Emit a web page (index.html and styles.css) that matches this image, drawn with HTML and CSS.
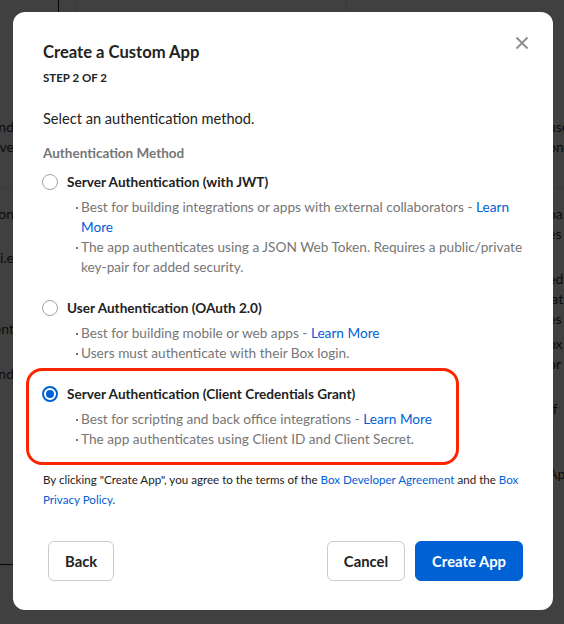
FILE: index.html
```html
<!DOCTYPE html>
<html lang="en">
<head>
<meta charset="utf-8">
<title>Create a Custom App</title>
<link rel="stylesheet" href="styles.css">
</head>
<body>
<div class="page">
  <div class="topbar">
    <span class="tb tb-a"></span>
    <span class="tb tb-b"></span>
    <span class="tb tb-c"></span>
  </div>
  <div class="cols">
    <div class="col col-left">
      <p class="r1">Find</p>
      <p>Serve</p>
      <hr class="rule">
      <p class="r3">Action</p>
      <p class="r4">i.e</p>
      <p class="r5">Content</p>
      <p class="r6">and</p>
      <hr class="rule navy">
    </div>
    <div class="col col-mid"></div>
    <div class="col col-right">
      <p class="r1">use</p>
      <p>on</p>
      <hr class="rule">
      <p class="r3">pa</p>
      <p>es</p>
      <p class="r7">ed</p>
      <p>lat</p>
      <p>es</p>
      <p class="r8">ox</p>
      <p>or</p>
      <p class="r9">tf</p>
      <p>r</p>
      <p class="r9">Ap</p>
    </div>
  </div>
</div>

<div class="overlay">
  <div class="modal" role="dialog">
    <button class="close" aria-label="Close">
      <svg viewBox="0 0 14 14" width="14" height="14"><path d="M1.5 1.5 L12.5 12.5 M12.5 1.5 L1.5 12.5" stroke="#909090" stroke-width="2" fill="none"/></svg>
    </button>
    <h1 class="title">Create a Custom App</h1>
    <div class="step">STEP 2 OF 2</div>
    <p class="lead">Select an authentication method.</p>
    <div class="group-label">Authentication Method</div>

    <div class="options">
      <div class="option">
        <label class="opt-label"><span class="radio"></span>Server Authentication (with JWT)</label>
        <ul class="bullets">
          <li>Best for building integrations or apps with external collaborators - <a href="#">Learn More</a></li>
          <li>The app authenticates using a JSON Web Token. Requires a public/private key-pair for added security.</li>
        </ul>
      </div>
      <div class="option">
        <label class="opt-label"><span class="radio"></span>User Authentication (OAuth 2.0)</label>
        <ul class="bullets">
          <li>Best for building mobile or web apps - <a href="#">Learn More</a></li>
          <li>Users must authenticate with their Box login.</li>
        </ul>
      </div>
      <div class="option highlight">
        <label class="opt-label"><span class="radio checked"></span>Server Authentication (Client Credentials Grant)</label>
        <ul class="bullets">
          <li>Best for scripting and back office integrations - <a href="#">Learn More</a></li>
          <li>The app authenticates using Client ID and Client Secret.</li>
        </ul>
      </div>
    </div>

    <p class="terms">By clicking "Create App", you agree to the terms of the <a href="#">Box Developer Agreement</a> and the <a href="#">Box Privacy Policy</a>.</p>

    <div class="footer">
      <button class="btn">Back</button>
      <div class="spacer"></div>
      <button class="btn">Cancel</button>
      <button class="btn primary">Create App</button>
    </div>
  </div>
</div>
</body>
</html>
```
FILE: styles.css
```css
* { box-sizing: border-box; margin: 0; padding: 0; }
html, body { height: 100%; }
body {
  font-family: Lato, "Helvetica Neue", Arial, sans-serif;
  color: #222;
  background: #fff;
  overflow: hidden;
}

/* background page */
.page { height: 100%; }
.topbar { height: 12px; display: flex; }
.tb { display: block; height: 12px; }
.tb-a { width: 59px; border-right: 1px solid #0a1f44; }
.tb-b { width: 18px; border-right: 1px solid #e4e4e4; }
.tb-c { width: 270px; border-right: 1px solid #e4e4e4; }
.cols { display: flex; height: 612px; }
.col { font-size: 14px; line-height: 20px; color: #333; white-space: nowrap; }
.col-left { width: 14px; overflow: hidden; text-align: right; display: flex; flex-direction: column; align-items: flex-end; }
.col-left p { direction: rtl; }
.col-mid { flex: 1; }
.col-right { width: 16px; overflow: hidden; }
.col p { line-height: 20px; }
.r1 { margin-top: 105px; }
.rule { border: 0; border-top: 1px solid #e8e8e8; margin-top: 31px; width: 600px; }
.r3 { margin-top: 15px; }
.r4 { margin-top: 24px; }
.r5 { margin-top: 51px; }
.r6 { margin-top: 25px; }
.r7 { margin-top: 25px; }
.r8 { margin-top: 5px; }
.r9 { margin-top: 25px; }
.rule.navy { border-top-color: #0a1f44; margin-top: 180px; }

/* overlay + modal */
.overlay {
  position: fixed;
  inset: 0;
  background: rgba(0, 0, 0, 0.75);
  padding: 12px 11px 14px 13px;
}
.modal {
  position: relative;
  background: #fff;
  border-radius: 12px;
  height: 598px;
  padding: 29px 30px 29px 30px;
  display: flex;
  flex-direction: column;
}
.close {
  position: absolute;
  top: 24px;
  right: 24px;
  width: 14px;
  height: 14px;
  border: 0;
  background: none;
  display: flex;
}
.title { font-size: 16.6px; line-height: 22px; font-weight: 700; color: #222; }
.step { margin-top: 7px; font-size: 11.5px; line-height: 16px; font-weight: 700; color: #222; }
.lead { margin-top: 23px; font-size: 14.6px; line-height: 20px; color: #222; }
.group-label { margin-top: 14px; font-size: 13.5px; line-height: 20px; font-weight: 700; color: #767676; }

.options { margin-top: 9px; display: flex; flex-direction: column; gap: 21px; }
.option { position: relative; }
.opt-label {
  display: flex;
  align-items: center;
  gap: 9px;
  height: 20px;
  font-size: 13.6px;
  font-weight: 700;
  color: #222;
  margin-left: -1px;
}
.radio {
  width: 16px;
  height: 16px;
  border-radius: 50%;
  border: 1px solid #a3a3a3;
  background: #fff;
  flex: none;
  display: flex;
  align-items: center;
  justify-content: center;
}
.radio.checked { border: 2px solid #0061d5; }
.radio.checked::after {
  content: "";
  width: 8px;
  height: 8px;
  border-radius: 50%;
  background: #0061d5;
}
.bullets { margin-top: 5px; margin-right: -4px; list-style: none; padding-left: 38px; }
.bullets li {
  position: relative;
  font-size: 13.65px;
  line-height: 20px;
  color: #767676;
}
.bullets li::before {
  content: "";
  position: absolute;
  left: -5px;
  top: 10px;
  width: 2px;
  height: 2px;
  background: #767676;
}
a { color: #0061d5; text-decoration: none; }

.highlight::after {
  content: "";
  position: absolute;
  top: -16px;
  bottom: -16px;
  left: -17px;
  right: 64px;
  border: 3px solid #ff2400;
  border-radius: 16px;
  pointer-events: none;
}

.terms { margin-top: 21px; font-size: 11.6px; line-height: 20px; color: #222; }

.footer { margin-top: auto; display: flex; padding-left: 5px; gap: 10px; }
.spacer { flex: 1; }
.btn {
  height: 40px;
  padding: 0 16px;
  border: 1px solid #ccc;
  border-radius: 6px;
  background: #fff;
  font-family: Lato, "Helvetica Neue", Arial, sans-serif;
  font-size: 14.8px;
  font-weight: 700;
  color: #222;
}
.btn.primary { background: #0061d5; border-color: #0061d5; color: #fff; }
```
